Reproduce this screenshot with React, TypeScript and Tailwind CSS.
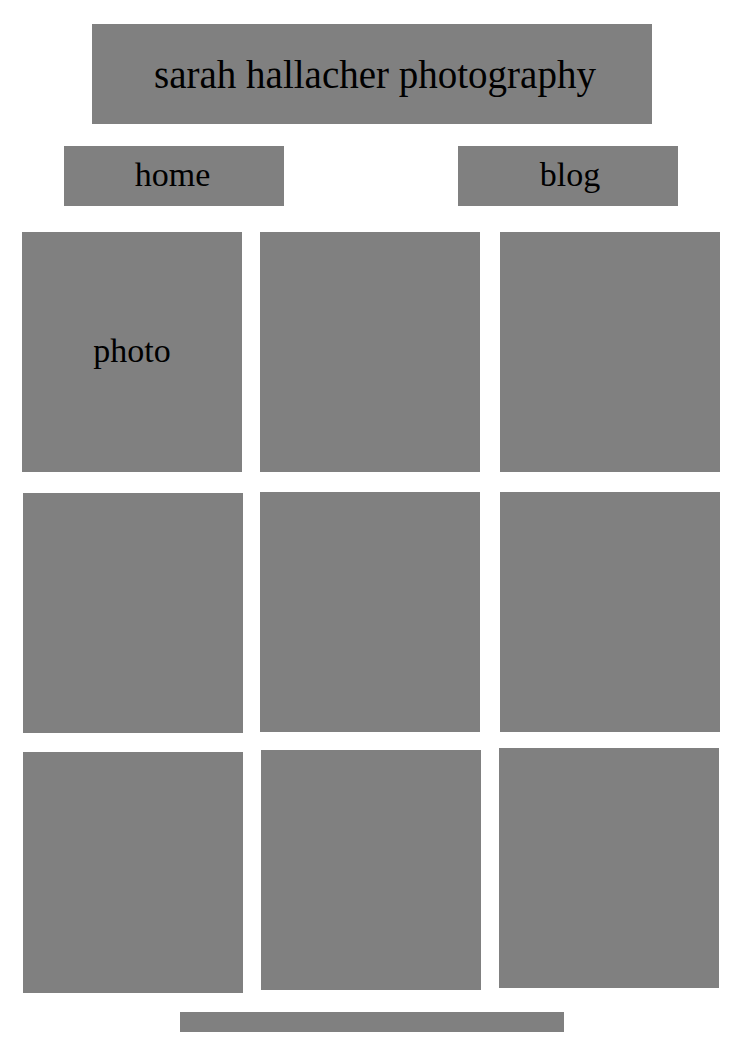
const serif = { fontFamily: '"Liberation Serif", "Times New Roman", serif' }

type Cell = { ml: string; mt: string; h: string; label?: string }

const rows: Cell[][] = [
  [
    { ml: 'ml-[22px]', mt: 'mt-0', h: 'h-[240px]', label: 'photo' },
    { ml: 'ml-[18px]', mt: 'mt-0', h: 'h-[240px]' },
    { ml: 'ml-[20px]', mt: 'mt-0', h: 'h-[240px]' },
  ],
  [
    { ml: 'ml-[23px]', mt: 'mt-[1px]', h: 'h-[240px]' },
    { ml: 'ml-[17px]', mt: 'mt-0', h: 'h-[240px]' },
    { ml: 'ml-[20px]', mt: 'mt-0', h: 'h-[240px]' },
  ],
  [
    { ml: 'ml-[23px]', mt: 'mt-[4px]', h: 'h-[241px]' },
    { ml: 'ml-[18px]', mt: 'mt-[2px]', h: 'h-[240px]' },
    { ml: 'ml-[18px]', mt: 'mt-0', h: 'h-[240px]' },
  ],
]

const rowGaps = ['mt-[26px]', 'mt-[20px]', 'mt-[15px]']

export default function App() {
  return (
    <div className="w-[745px] min-h-[1053px] bg-white text-black" style={serif}>
      <div className="pt-[24px] pl-[92px]">
        <div className="w-[560px] h-[100px] bg-[#808080] flex items-center justify-center text-[39px] leading-none pl-[6px]">
          sarah hallacher photography
        </div>
      </div>

      <nav className="mt-[22px] flex">
        <a className="ml-[64px] w-[220px] h-[60px] bg-[#808080] flex items-center justify-center text-[34px] leading-none pb-[2px] pr-[3px]">
          home
        </a>
        <a className="ml-[174px] w-[220px] h-[60px] bg-[#808080] flex items-center justify-center text-[34px] leading-none pb-[2px] pl-[4px]">
          blog
        </a>
      </nav>

      {rows.map((row, r) => (
        <div key={r} className={`flex items-start ${rowGaps[r]}`}>
          {row.map((cell, c) => (
            <div
              key={c}
              className={`w-[220px] bg-[#808080] flex items-center justify-center text-[34px] leading-none pb-[2px] ${cell.ml} ${cell.mt} ${cell.h}`}
            >
              {cell.label}
            </div>
          ))}
        </div>
      ))}

      <footer className="mt-[19px] pl-[180px]">
        <div className="w-[384px] h-[20px] bg-[#808080]" />
      </footer>
    </div>
  )
}
